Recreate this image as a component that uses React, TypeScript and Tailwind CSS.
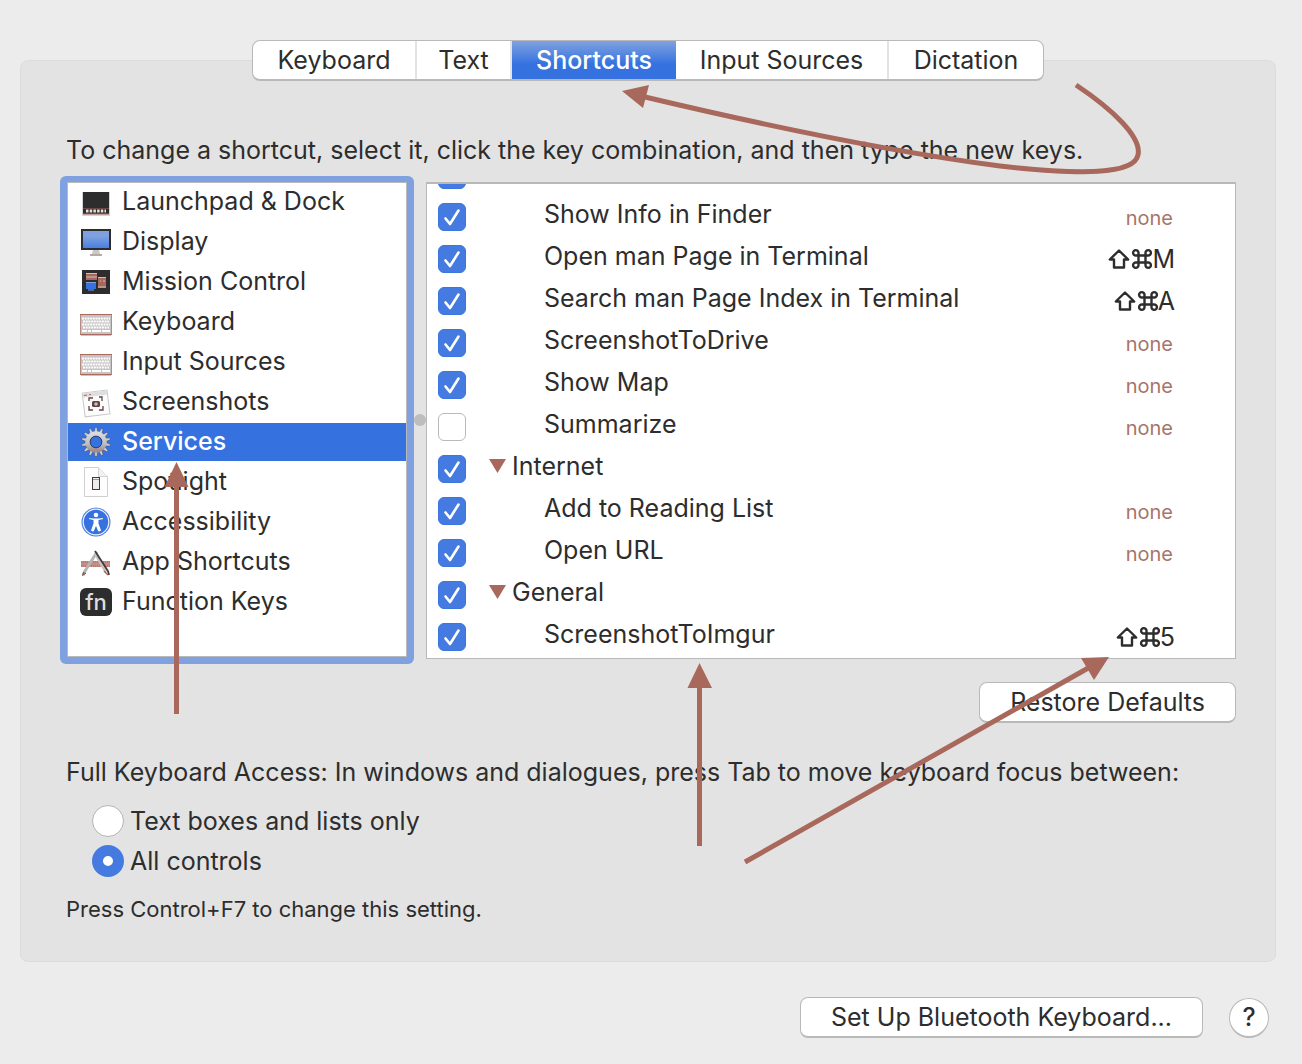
import { useState } from "react";
import type { ReactNode } from "react";

const TABS = [
  { name: "Keyboard", width: "w-[164px]" },
  { name: "Text", width: "w-[95px]" },
  { name: "Shortcuts", width: "w-[164px]" },
  { name: "Input Sources", width: "w-[213px]" },
  { name: "Dictation", width: "w-[154px]" },
];

function LaunchpadIcon() {
  return (
    <svg viewBox="0 0 32 32" className="size-8" aria-hidden="true">
      <rect x="2" y="6" width="28" height="24" fill="#d4d4d4" />
      <rect x="3" y="6" width="26" height="22" fill="#2d2d2d" />
      <rect x="3" y="22" width="26" height="1" fill="#6d4842" />
      <path d="M6 25h20" stroke="#e6e0df" strokeWidth="3" strokeDasharray="2.5 1.2" />
      <path d="M3 28h26" stroke="#a8685c" />
    </svg>
  );
}

function DisplayIcon() {
  return (
    <svg viewBox="0 0 32 32" className="size-8" aria-hidden="true">
      <defs>
        <linearGradient id="screen" x1="0" y1="0" x2="0" y2="1">
          <stop offset="0.3" stopColor="#7fa1df" />
          <stop offset="1" stopColor="#4a7fe0" />
        </linearGradient>
      </defs>
      <path d="M13 24h6l1 4h-8z" fill="#c9c9c9" />
      <path d="M10 29h12" stroke="#b9aaa7" strokeWidth="2" />
      <rect x="1" y="3" width="30" height="21" fill="#2d2d2d" />
      <rect x="3" y="5" width="26" height="17" fill="url(#screen)" />
    </svg>
  );
}

function MissionControlIcon() {
  return (
    <svg viewBox="0 0 32 32" className="size-8" aria-hidden="true">
      <rect x="2" y="4" width="28" height="24" fill="#2d2d2d" />
      <rect x="6" y="7" width="11" height="7" fill="#a8685c" />
      <path d="M6 7.500h11M6 11h11" stroke="#c9c1c0" />
      <rect x="6" y="16" width="10" height="7" fill="#3572e0" />
      <path d="M6 16.500h10M8 24h6" stroke="#7fa1df" />
      <rect x="18" y="11" width="8" height="11" fill="#a8685c" />
      <path d="M18 11.500h8M20 15h1M23 15h2M18 21h8" stroke="#c9c1c0" />
    </svg>
  );
}

function KeyboardIcon() {
  return (
    <svg viewBox="0 0 32 32" className="size-8" aria-hidden="true">
      <rect x="0.500" y="8.500" width="31" height="20" fill="#c6c3c2" stroke="#b98a82" />
      <path d="M0 8.500h32M0 28.500h32" stroke="#a8685c" />
      <path d="M2 12.500h28M3 15.500h27M2 18.500h28M3 21.500h27" stroke="#fff" strokeWidth="2" strokeDasharray="2 0.700" />
      <path d="M2 25h5m1 0h3m1 0h9m1 0h8" stroke="#fff" strokeWidth="2" />
      <path d="M1 29.500h30" stroke="#c6c6c6" />
    </svg>
  );
}

function ScreenshotsIcon() {
  return (
    <svg viewBox="0 0 32 32" className="size-8" aria-hidden="true">
      <g transform="rotate(-7 16 17)">
        <rect x="3.500" y="5.500" width="25" height="24" fill="#fcfcfc" stroke="#c8c8c8" />
        <rect x="4" y="6" width="24" height="4" fill="#dedede" />
        <path d="M5 8h3M10 8h2" stroke="#a8685c" />
      </g>
      <path d="M9 15v-3h4M19 11h3v4M23 20v4h-4M13 24h-4v-4" fill="none" stroke="#5d4541" strokeWidth="1.300" />
      <rect x="12" y="15" width="8" height="6" rx="1.500" fill="#5d4541" />
      <circle cx="16" cy="18" r="1.800" fill="#d9b8b2" />
    </svg>
  );
}

function ServicesIcon() {
  const teeth = Array.from({ length: 14 }, (_, i) => (i * 360) / 14);
  return (
    <svg viewBox="0 0 32 32" className="size-8" aria-hidden="true">
      <defs>
        <linearGradient id="gear" x1="0" y1="0" x2="0" y2="1">
          <stop offset="0" stopColor="#d9dade" />
          <stop offset="0.600" stopColor="#c0bfc0" />
          <stop offset="1" stopColor="#a58a85" />
        </linearGradient>
      </defs>
      {teeth.map((a) => (
        <path key={a} d="M14.300 7L15 1.500h2l0.700 5.500z" fill="#cfcfd2" stroke="#3c4a6b" strokeWidth="0.500" transform={`rotate(${a} 16 16)`} />
      ))}
      <circle cx="16" cy="16" r="8.500" fill="none" stroke="url(#gear)" strokeWidth="4.500" />
      <circle cx="16" cy="16" r="5.800" fill="#3572e0" stroke="#34405c" strokeWidth="1" />
    </svg>
  );
}

function SpotlightIcon() {
  return (
    <svg viewBox="0 0 32 32" className="size-8" aria-hidden="true">
      <path d="M4.500 1.500h14l9 9v20h-23z" fill="#fefefe" stroke="#cfcfcf" />
      <path d="M18.500 1.500v9h9" fill="#f1f1f1" stroke="#d4d4d4" />
      <rect x="12.500" y="11.500" width="7" height="12" fill="#ececec" stroke="#433a39" />
      <path d="M13 13.500h6" stroke="#9a9a9a" />
    </svg>
  );
}

function AccessibilityIcon() {
  return (
    <svg viewBox="0 0 32 32" className="size-8" aria-hidden="true">
      <circle cx="16" cy="16" r="14.500" fill="#4a7de0" />
      <circle cx="16" cy="16" r="12.800" fill="#3572e0" stroke="#e8eefb" strokeWidth="1.200" />
      <circle cx="16" cy="9" r="2.300" fill="#fff" />
      <path d="M9 12.600l5 0.900v4l-2.500 7 1.800 0.600 2.700-6.500 2.700 6.500 1.800-0.600-2.500-7v-4l5-0.900" fill="#fff" stroke="#fff" strokeWidth="1" strokeLinejoin="round" />
    </svg>
  );
}

function AppShortcutsIcon() {
  return (
    <svg viewBox="0 0 32 32" className="size-8" aria-hidden="true">
      <rect x="1" y="15" width="29" height="6" fill="#c58d84" />
      <path d="M1 16h29M1 20h29" stroke="#a8685c" strokeDasharray="1 1" />
      <path d="M17 6L5 25l-2 4" fill="none" stroke="#b4b4b4" strokeWidth="3" />
      <path d="M4 26l-1.500 3.500L6 27" fill="none" stroke="#6d4842" />
      <path d="M15 7l11 19" stroke="#c4c4c4" strokeWidth="3" />
      <path d="M15 5l13 20 1 4" fill="none" stroke="#433a39" strokeWidth="1.800" />
      <path d="M24 25l4 4" stroke="#a8685c" strokeWidth="1.500" />
    </svg>
  );
}

function FunctionKeysIcon() {
  return (
    <span aria-hidden="true" className="flex h-7 w-8 items-center justify-center rounded-md bg-[#2d2d2d] text-[22px] leading-none font-medium text-[#dedede]">
      fn
    </span>
  );
}

const CATEGORIES: { name: string; icon: ReactNode }[] = [
  { name: "Launchpad & Dock", icon: <LaunchpadIcon /> },
  { name: "Display", icon: <DisplayIcon /> },
  { name: "Mission Control", icon: <MissionControlIcon /> },
  { name: "Keyboard", icon: <KeyboardIcon /> },
  { name: "Input Sources", icon: <KeyboardIcon /> },
  { name: "Screenshots", icon: <ScreenshotsIcon /> },
  { name: "Services", icon: <ServicesIcon /> },
  { name: "Spotlight", icon: <SpotlightIcon /> },
  { name: "Accessibility", icon: <AccessibilityIcon /> },
  { name: "App Shortcuts", icon: <AppShortcutsIcon /> },
  { name: "Function Keys", icon: <FunctionKeysIcon /> },
];

type Service = { name: string; keys?: string; on: boolean; group?: boolean };

const SERVICES: Service[] = [
  { name: "", on: true },
  { name: "Show Info in Finder", on: true },
  { name: "Open man Page in Terminal", keys: "M", on: true },
  { name: "Search man Page Index in Terminal", keys: "A", on: true },
  { name: "ScreenshotToDrive", on: true },
  { name: "Show Map", on: true },
  { name: "Summarize", on: false },
  { name: "Internet", on: true, group: true },
  { name: "Add to Reading List", on: true },
  { name: "Open URL", on: true },
  { name: "General", on: true, group: true },
  { name: "ScreenshotToImgur", keys: "5", on: true },
];

function ShiftCommand() {
  return (
    <svg viewBox="0 0 44 22" className="h-[22px] w-11" fill="none" stroke="#2d2d2d" strokeWidth="2.400" role="img" aria-label="Shift Command">
      <path d="M11 2.500L1.800 11.500H6v8h10v-8h4.200z" strokeLinejoin="round" />
      <path d="M30.500 7.500h7v7h-7zM30.500 7.500H28a2.700 2.700 0 1 1 2.500-2.700zM37.500 7.500V4.800A2.700 2.700 0 1 1 40 7.500zM37.500 14.500H40a2.700 2.700 0 1 1-2.500 2.700zM30.500 14.500v2.700A2.700 2.700 0 1 1 28 14.500z" />
    </svg>
  );
}

function ServiceRow({ service, index }: { service: Service; index: number }) {
  const id = `service-${index}`;
  return (
    <tr className="h-[42px]">
      <td className="w-[62px] p-0 pl-[11px]">
        <span className="grid size-7">
          <input
            id={id}
            type="checkbox"
            defaultChecked={service.on}
            aria-label={service.name || "Service"}
            className="peer col-start-1 row-start-1 size-7 appearance-none rounded-md border border-[#b9b9b9] bg-white checked:border-[#3b75e0] checked:bg-[#457be0]"
          />
          <svg viewBox="0 0 28 28" className="pointer-events-none invisible col-start-1 row-start-1 size-7 peer-checked:visible" aria-hidden="true">
            <path d="M7.500 15.500l4.500 5.500 8.500-13.500" fill="none" stroke="#fff" strokeWidth="2.600" strokeLinecap="round" strokeLinejoin="round" />
          </svg>
        </span>
      </td>
      <td className="p-0 pb-1.5">
        {service.group ? (
          <span className="flex items-center gap-1.5">
            <svg viewBox="0 0 17 14" className="h-3.5 w-[17px]" aria-hidden="true">
              <path d="M0 0h17L8.500 14z" fill="#a8685c" />
            </svg>
            <label htmlFor={id}>{service.name}</label>
          </span>
        ) : (
          <label htmlFor={id} className="pl-[55px]">
            {service.name}
          </label>
        )}
      </td>
      <td className="p-0 pr-[60px]">
        {service.name && !service.group && (
          <span className="flex items-center justify-end">
            {service.keys ? (
              <>
                <ShiftCommand />
                {service.keys}
              </>
            ) : (
              <span className="pt-0.5 pr-0.5 text-[20px] text-[#a8746a]">none</span>
            )}
          </span>
        )}
      </td>
    </tr>
  );
}

function AccessOption({ label, checked }: { label: string; checked?: boolean }) {
  return (
    <label className="flex h-10 items-center gap-1.5">
      <input
        type="radio"
        name="keyboard-access"
        defaultChecked={checked}
        className="size-8 appearance-none rounded-full border border-[#b4b4b4] bg-white checked:border-[11px] checked:border-[#457be0]"
      />
      {label}
    </label>
  );
}

function Annotations() {
  return (
    <svg viewBox="0 0 1302 1064" className="pointer-events-none absolute top-0 left-0 h-[1064px] w-[1302px]" fill="none" stroke="#a8685c" strokeWidth="5" aria-hidden="true">
      <path d="M1076 85C1112 109 1142 137 1138 155C1134 175 1080 175 1000 166C900 153 780 129 645 97" />
      <path d="M176.500 714V485M699.500 846V686M745 862L1090 667" />
      <g fill="#a8685c" stroke="none">
        <path d="M622 91L649 85 643 108z" />
        <path d="M176.500 462L188.500 487H164.500z" />
        <path d="M699.500 663L712 688H687.500z" />
        <path d="M1109 657L1081 658 1094 680z" />
      </g>
    </svg>
  );
}

export default function App() {
  const [tab, setTab] = useState("Shortcuts");
  const [category, setCategory] = useState("Services");

  return (
    <div className="relative min-h-screen overflow-hidden bg-[#ececec] pt-10 pr-[26px] pb-[26px] pl-5 font-['Inter',sans-serif] text-[25px] leading-8 text-[#2d2d2d]">
      <nav className="relative z-10 -mb-[21px] flex justify-center">
        <div className="flex h-[41px] overflow-hidden rounded-lg border border-b-2 border-[#b9b9b9] bg-white">
          {TABS.map(({ name, width }) => (
            <button
              key={name}
              type="button"
              onClick={() => setTab(name)}
              className={`${width} ${
                name === tab
                  ? "bg-linear-to-b from-[#7fa1df] to-[#3572e0] to-60% font-medium text-white"
                  : "border-r-2 border-[#e3e3e3] last:border-r-0"
              }`}
            >
              {name}
            </button>
          ))}
        </div>
      </nav>

      <main className="rounded-lg border border-[#dcdcdc] bg-[#e3e3e3] px-[39px] pt-[73px] pb-9">
        <p className="pl-1.5">To change a shortcut, select it, click the key combination, and then type the new keys.</p>

        <div className="mt-2.5 flex items-center">
          <div className="h-[488px] w-[354px] shrink-0 rounded-md bg-[#7fa1df] p-[7px] pt-1.5">
            <ul className="flex h-full flex-col gap-0.5 border border-[#b9b9b9] bg-white">
              {CATEGORIES.map((item) => (
                <li key={item.name}>
                  <button
                    type="button"
                    onClick={() => setCategory(item.name)}
                    className={
                      item.name === category
                        ? "flex h-[38px] w-full items-center gap-2.5 bg-[#3572e0] pl-3 font-medium text-white"
                        : "flex h-[38px] w-full items-center gap-2.5 pl-3"
                    }
                  >
                    {item.icon}
                    <span className="pb-0.5">{item.name}</span>
                  </button>
                </li>
              ))}
            </ul>
          </div>
          <span className="flex w-3 shrink-0 justify-center">
            <span className="size-3 rounded-full bg-[#bdbdbd]" />
          </span>
          <div className="flex h-[477px] min-w-0 flex-1 flex-col justify-end overflow-hidden border border-t-2 border-[#b9b9b9] bg-white">
            <table className="w-full border-collapse">
              <tbody>
                {SERVICES.map((service, i) => (
                  <ServiceRow key={i} service={service} index={i} />
                ))}
              </tbody>
            </table>
          </div>
        </div>

        <div className="mt-[18px] flex justify-end">
          <button type="button" className="h-[41px] rounded-lg border border-b-2 border-[#b9b9b9] bg-white px-[30px]">
            Restore Defaults
          </button>
        </div>

        <fieldset className="mt-[33px] pl-1.5">
          <legend>Full Keyboard Access: In windows and dialogues, press Tab to move keyboard focus between:</legend>
          <div className="mt-[13px] pl-[26px]">
            <AccessOption label="Text boxes and lists only" />
            <AccessOption label="All controls" checked />
          </div>
        </fieldset>
        <p className="mt-3 pl-1.5 text-[22px]">Press Control+F7 to change this setting.</p>
      </main>

      <footer className="mt-[35px] flex items-center justify-end gap-[26px] pr-[7px]">
        <button type="button" className="h-[41px] rounded-lg border border-b-2 border-[#b9b9b9] bg-white px-[30px]">
          Set Up Bluetooth Keyboard...
        </button>
        <button type="button" aria-label="Help" className="size-10 rounded-full border border-b-2 border-[#b9b9b9] bg-white font-medium">
          ?
        </button>
      </footer>

      <Annotations />
    </div>
  );
}
